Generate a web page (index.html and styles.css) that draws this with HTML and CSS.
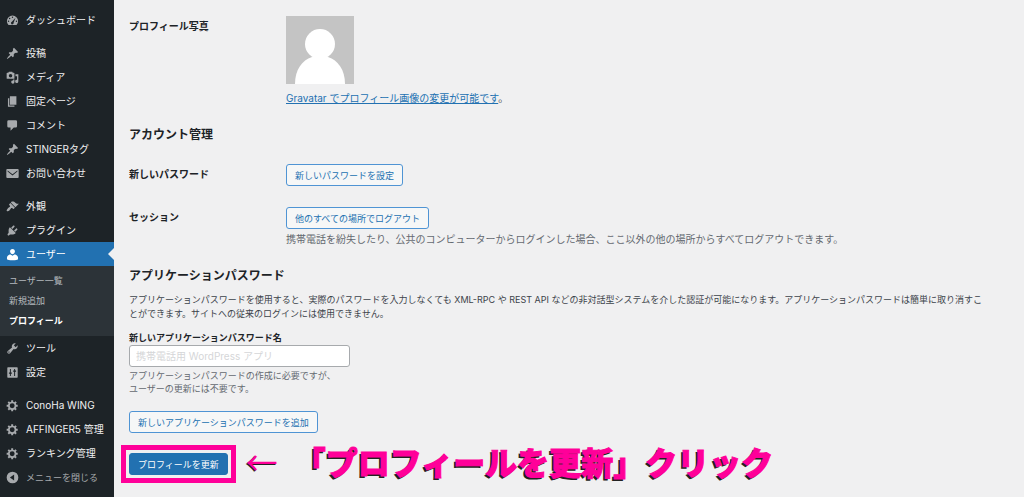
FILE: index.html
```html
<!DOCTYPE html>
<html lang="ja">

<head>
    <meta charset="UTF-8">
    <meta name="viewport" content="width=device-width, initial-scale=1.0">
    <title>プロフィール</title>
    <link rel="stylesheet" href="styles.css">
</head>

<body>
    <nav class="sidebar">
        <ul class="menu">
            <li><a href="#"><svg viewBox="0 0 20 20"><path fill-rule="evenodd" d="M3.8 17h12.4A8.6 8.6 0 0 0 18.6 11 8.6 8.6 0 0 0 1.4 11a8.6 8.6 0 0 0 2.4 6zM10 4a1.1 1.1 0 1 1 0 2.2A1.1 1.1 0 0 1 10 4zM5.6 5.8a1.1 1.1 0 1 1 0 2.2 1.1 1.1 0 0 1 0-2.2zM3.9 10a1.1 1.1 0 1 1 0 2.2 1.1 1.1 0 0 1 0-2.2zm12.2 0a1.1 1.1 0 1 1 0 2.2 1.1 1.1 0 0 1 0-2.2zM14.6 5.8l-2.9 7.8a2 2 0 1 1-2.6-1.5z"/></svg>ダッシュボード</a></li>
            <li class="separator"></li>
            <li><a href="#"><svg viewBox="0 0 20 20"><path d="M10.44 3.02l1.82-1.82 6.36 6.35-1.83 1.82c-1.05-.68-2.48-.57-3.41.36l-.75.75c-.92.93-1.04 2.35-.35 3.41l-1.83 1.82-2.41-2.41-2.8 2.79c-.42.42-3.38 2.71-3.8 2.29s1.86-3.39 2.28-3.81l2.79-2.79L4.1 9.36l1.83-1.82c1.05.69 2.48.57 3.4-.36l.75-.75c.93-.92 1.05-2.35.36-3.41z"/></svg>投稿</a></li>
            <li><a href="#"><svg viewBox="0 0 20 20"><path fill-rule="evenodd" d="M2 2.5h1.500L4.500 1h5l1 1.500H12q1 0 1 1V11q0 1-1 1H2q-1 0-1-1V3.500q0-1 1-1zM7 4.500a2.700 2.700 0 1 0 0 5.400 2.700 2.700 0 0 0 0-5.400z"/><path d="M14.500 5H19v11a2.500 2.500 0 1 1-2-2.450V8h-2.500zM11 13h2v4a2.500 2.500 0 1 1-2-2.450z"/></svg>メディア</a></li>
            <li><a href="#"><svg viewBox="0 0 20 20"><path d="M6 15V2h10v13H6zm-1 1h8v2H3V5h2v11z"/></svg>固定ページ</a></li>
            <li><a href="#"><svg viewBox="0 0 20 20"><path d="M4 2h11q2 0 2 2v7q0 2-2 2h-3l-5 5v-5H4q-2 0-2-2V4q0-2 2-2z"/></svg>コメント</a></li>
            <li><a href="#"><svg viewBox="0 0 20 20"><path d="M10.44 3.02l1.82-1.82 6.36 6.35-1.83 1.82c-1.05-.68-2.48-.57-3.41.36l-.75.75c-.92.93-1.04 2.35-.35 3.41l-1.83 1.82-2.41-2.41-2.8 2.79c-.42.42-3.38 2.71-3.8 2.29s1.86-3.39 2.28-3.81l2.79-2.79L4.1 9.36l1.83-1.82c1.05.69 2.48.57 3.4-.36l.75-.75c.93-.92 1.05-2.35.36-3.41z"/></svg>STINGERタグ</a></li>
            <li><a href="#"><svg viewBox="0 0 20 20"><path fill-rule="evenodd" d="M2 3h16q1.500 0 1.500 1.500v11Q19.500 17 18 17H2Q.5 17 .5 15.500v-11Q.5 3 2 3zM2.500 5.200v1.600L10 13l7.500-6.200V5.200L10 11z"/></svg>お問い合わせ</a></li>
            <li class="separator"></li>
            <li><a href="#"><svg viewBox="0 0 20 20"><path d="M14.48 11.06L7.41 3.99l1.5-1.5c.5-.56 2.3-.47 3.51.32 1.21.8 1.43 1.28 2.91 2.1 1.18.64 2.45 1.26 4.45.85zm-.71.71L6.7 4.7 4.93 6.47c-.39.39-.39 1.02 0 1.41l1.06 1.06c.39.39.39 1.03 0 1.42-.6.6-1.43 1.11-2.21 1.69-.35.26-.7.53-1.01.84C1.43 14.23.4 16.08 1.4 17.07c.99 1 2.84-.03 4.18-1.36.31-.31.58-.66.85-1.02.57-.78 1.08-1.61 1.69-2.21.39-.39 1.02-.39 1.41 0l1.06 1.06c.39.39 1.02.39 1.41 0z"/></svg>外観</a></li>
            <li><a href="#"><svg viewBox="0 0 20 20"><path d="M13.11 4.36L9.87 7.6 8 5.73l3.24-3.24c.35-.34 1.05-.2 1.56.32.52.51.66 1.21.31 1.55zm-8 1.77l.91-1.12 9.01 9.01-1.19.84c-.71.71-2.63 1.16-3.82 1.16H6.14L4.9 17.26c-.59.59-1.54.59-2.12 0-.59-.58-.59-1.53 0-2.12l1.24-1.24v-3.88c0-1.13.4-3.19 1.09-3.89zm7.26 3.97l3.24-3.24c.34-.35 1.04-.21 1.55.31.52.51.66 1.21.31 1.55l-3.24 3.25z"/></svg>プラグイン</a></li>
            <li class="current">
                <a href="#"><svg viewBox="0 0 20 20"><path d="M10 9.500c-3 0-3.700-3.600-3.700-3.600C6 3.500 7.300 1.500 10 1.500s4 2 3.700 4.400c0 0-.7 3.600-3.700 3.600zm0 2.500l3-2c3 0 5.500 2.500 5.500 4.800v2.700s-4 1.200-8.500 1.200-8.500-1.200-8.500-1.200v-2.700C1.500 12.500 4 10 7 10z"/></svg>ユーザー</a>
                <ul class="submenu">
                    <li><a href="#">ユーザー一覧</a></li>
                    <li><a href="#">新規追加</a></li>
                    <li><a class="active" href="#">プロフィール</a></li>
                </ul>
            </li>
            <li><a href="#"><svg viewBox="0 0 20 20"><path d="M16.68 9.77c-1.34 1.34-3.3 1.67-4.95.99l-5.41 6.52c-.99.99-2.59.99-3.58 0s-.99-2.59 0-3.57l6.52-5.42c-.68-1.65-.35-3.61.99-4.95 1.28-1.28 3.12-1.62 4.72-1.06l-2.89 2.89 2.82 2.82 2.86-2.87c.53 1.58.18 3.39-1.08 4.65zM3.81 16.21c.4.39 1.04.39 1.43 0 .4-.4.4-1.04 0-1.43-.39-.4-1.03-.4-1.43 0-.39.39-.39 1.03 0 1.43z"/></svg>ツール</a></li>
            <li><a href="#"><svg viewBox="0 0 20 20"><path fill-rule="evenodd" d="M3 2h14q1 0 1 1v14q0 1-1 1H3q-1 0-1-1V3q0-1 1-1zM6 4.500V10H4.500v2H6v3.500h1.500V12H9v-2H7.500V4.500zM12.500 4.500V7H11v2h1.500v6.500H14V9h1.500V7H14V4.500z"/></svg>設定</a></li>
            <li class="separator"></li>
            <li><a href="#"><svg viewBox="0 0 20 20"><path fill-rule="evenodd" d="M18 12h-2.180c-.17.7-.44 1.350-.81 1.930l1.540 1.540-2.100 2.100-1.540-1.540c-.58.36-1.230.63-1.910.79V19H8v-2.180c-.68-.16-1.330-.43-1.910-.79l-1.540 1.540-2.120-2.120 1.540-1.540c-.36-.58-.63-1.230-.79-1.910H1V9.030h2.170c.16-.7.44-1.350.8-1.940L2.430 5.550l2.100-2.100 1.540 1.540c.58-.37 1.240-.64 1.930-.81V2h3v2.180c.68.16 1.330.43 1.910.79l1.540-1.540 2.120 2.120-1.540 1.540c.36.59.64 1.240.8 1.940H18zm-8.500 2.300a3.800 3.800 0 1 0 0-7.600 3.800 3.800 0 0 0 0 7.600z"/></svg>ConoHa WING</a></li>
            <li><a href="#"><svg viewBox="0 0 20 20"><path fill-rule="evenodd" d="M18 12h-2.180c-.17.7-.44 1.350-.81 1.930l1.540 1.540-2.100 2.100-1.540-1.540c-.58.36-1.230.63-1.910.79V19H8v-2.180c-.68-.16-1.330-.43-1.910-.79l-1.540 1.540-2.120-2.120 1.540-1.540c-.36-.58-.63-1.230-.79-1.910H1V9.030h2.170c.16-.7.44-1.350.8-1.940L2.430 5.550l2.100-2.100 1.540 1.540c.58-.37 1.240-.64 1.930-.81V2h3v2.180c.68.16 1.330.43 1.910.79l1.540-1.540 2.120 2.120-1.540 1.540c.36.59.64 1.240.8 1.940H18zm-8.500 2.300a3.800 3.800 0 1 0 0-7.600 3.800 3.800 0 0 0 0 7.600z"/></svg>AFFINGER5 管理</a></li>
            <li><a href="#"><svg viewBox="0 0 20 20"><path fill-rule="evenodd" d="M18 12h-2.180c-.17.7-.44 1.350-.81 1.930l1.540 1.540-2.100 2.100-1.540-1.540c-.58.36-1.230.63-1.910.79V19H8v-2.180c-.68-.16-1.330-.43-1.910-.79l-1.540 1.540-2.120-2.120 1.540-1.540c-.36-.58-.63-1.230-.79-1.910H1V9.030h2.170c.16-.7.44-1.350.8-1.940L2.430 5.550l2.100-2.100 1.540 1.540c.58-.37 1.240-.64 1.930-.81V2h3v2.180c.68.16 1.330.43 1.910.79l1.540-1.540 2.120 2.120-1.540 1.540c.36.59.64 1.240.8 1.940H18zm-8.500 2.300a3.800 3.800 0 1 0 0-7.600 3.800 3.800 0 0 0 0 7.600z"/></svg>ランキング管理</a></li>
        </ul>
        <button type="button" class="collapse"><svg viewBox="0 0 20 20"><path fill-rule="evenodd" d="M10 1a9 9 0 1 1 0 18 9 9 0 0 1 0-18zm2.500 4.500L6 10l6.500 4.500z"/></svg>メニューを閉じる</button>
    </nav>

    <main class="content">
        <div class="row">
            <div class="label">プロフィール写真</div>
            <div class="field">
                <svg class="avatar" viewBox="0 0 68 68">
                    <rect width="68" height="68" fill="#c4c4c4"/>
                    <circle cx="34" cy="28" r="15" fill="#fff"/>
                    <path d="M9 68C9 54 16 44 26 41h16c10 3 17 13 17 27z" fill="#fff"/>
                </svg>
                <p class="photo-note"><a href="#">Gravatar でプロフィール画像の変更が可能です</a>。</p>
            </div>
        </div>

        <h2>アカウント管理</h2>
        <div class="row">
            <div class="label">新しいパスワード</div>
            <div class="field"><button type="button" class="button">新しいパスワードを設定</button></div>
        </div>
        <div class="row">
            <div class="label">セッション</div>
            <div class="field">
                <button type="button" class="button">他のすべての場所でログアウト</button>
                <p class="session-note">携帯電話を紛失したり、公共のコンピューターからログインした場合、ここ以外の他の場所からすべてログアウトできます。</p>
            </div>
        </div>

        <h2>アプリケーションパスワード</h2>
        <p class="intro">アプリケーションパスワードを使用すると、実際のパスワードを入力しなくても XML-RPC や REST API などの非対話型システムを介した認証が可能になります。アプリケーションパスワードは簡単に取り消すこ<br>とができます。サイトへの従来のログインには使用できません。</p>
        <div class="app-password">
            <label for="app-name">新しいアプリケーションパスワード名</label>
            <input type="text" id="app-name" placeholder="携帯電話用 WordPress アプリ">
            <p>アプリケーションパスワードの作成に必要ですが、<br>ユーザーの更新には不要です。</p>
        </div>
        <button type="button" class="button">新しいアプリケーションパスワードを追加</button>

        <div class="submit">
            <div class="highlight"><button type="submit" class="button primary">プロフィールを更新</button></div>
            <div class="callout"><span class="arrow">←</span><span>「プロフィールを更新」クリック</span></div>
        </div>
    </main>
</body>

</html>
```

FILE: styles.css
```css
* {
    box-sizing: border-box;
}

body {
    margin: 0;
    display: flex;
    min-height: 100vh;
    background: #f0f0f1;
    color: #3c434a;
    font-family: Inter, "Noto Sans CJK JP", sans-serif;
    font-size: 9px;
    line-height: 14px;
}

p,
h2,
ul {
    margin: 0;
    padding: 0;
}

ul {
    list-style: none;
}

button,
input {
    font-family: inherit;
    font-size: 9px;
}

/* sidebar */
.sidebar {
    flex: 0 0 114px;
    padding-top: 8px;
    background: #1d2327;
}

.menu a,
.collapse {
    display: flex;
    align-items: center;
    gap: 7px;
    height: 24px;
    padding-left: 6px;
    color: #f0f0f1;
    font-size: 10px;
    text-decoration: none;
    white-space: nowrap;
}

.sidebar svg {
    flex: none;
    width: 13px;
    height: 13px;
    fill: #a7aaad;
}

.separator {
    height: 9px;
}

.current {
    position: relative;
}

.current > a {
    background: #2271b1;
    color: #fff;
}

.current > a svg {
    fill: #fff;
}

.current::after {
    content: "";
    position: absolute;
    top: 6px;
    right: 0;
    border: 6px solid transparent;
    border-left: 0;
    border-right-color: #f0f0f1;
}

.submenu {
    padding: 5px 0;
    background: #2c3338;
}

.submenu a {
    height: 20px;
    padding-left: 9px;
    color: #b4b9be;
    font-size: 9px;
}

.submenu .active {
    color: #fff;
    font-weight: bold;
}

.collapse {
    width: 100%;
    border: none;
    background: none;
    color: #a7aaad;
    font-size: 9px;
    cursor: pointer;
}

/* profile form */
.content {
    flex: 1;
    min-width: 0;
    padding: 16px 12px 16px 15px;
}

.row {
    display: flex;
    margin-bottom: 21px;
}

.label {
    flex: 0 0 157px;
    color: #1d2327;
    font-size: 10px;
    font-weight: bold;
    line-height: 21px;
}

.field {
    flex: 1;
}

.avatar {
    display: block;
    width: 68px;
    height: 68px;
}

.photo-note {
    margin-top: 7px;
    font-size: 10px;
}

.photo-note a {
    color: #2271b1;
}

.session-note {
    margin-top: 3px;
    color: #646970;
    font-size: 10px;
}

h2 {
    margin-bottom: 20px;
    color: #1d2327;
    font-size: 12px;
    line-height: 18px;
}

.button {
    display: block;
    height: 22px;
    padding: 0 8px;
    border: 1px solid #4f94d4;
    border-radius: 3px;
    background: #f6f7f7;
    color: #2271b1;
    white-space: nowrap;
    cursor: pointer;
}

.primary {
    border-color: #2271b1;
    background: #2271b1;
    color: #fff;
}

.intro {
    margin-top: -12px;
    white-space: nowrap;
}

.app-password {
    margin: 10px 0 16px;
}

.app-password label {
    display: block;
    color: #1d2327;
    font-weight: bold;
}

.app-password input {
    display: block;
    width: 221px;
    height: 22px;
    margin-bottom: 2px;
    padding: 0 6px;
    border: 1px solid #a7aaad;
    border-radius: 3px;
    background: #fff;
    font-size: 10px;
}

.app-password input::placeholder {
    color: #d5d6d8;
}

.app-password p {
    color: #646970;
    line-height: 13px;
}

.submit {
    display: flex;
    align-items: center;
    gap: 18px;
    height: 22px;
    margin-top: 20px;
}

.highlight {
    position: relative;
}

.highlight::after {
    content: "";
    position: absolute;
    inset: -8px;
    border: 5px solid #ff0099;
    pointer-events: none;
}

.callout {
    display: flex;
    align-items: center;
    gap: 16px;
    padding-bottom: 6px;
    color: #ff0099;
    font-family: "Noto Sans CJK JP", sans-serif;
    font-size: 32px;
    font-weight: 900;
    line-height: 32px;
    text-shadow: -2px 2px #222;
    -webkit-text-stroke: 1px #ff0099;
    white-space: nowrap;
}

.arrow {
    font-weight: normal;
    text-shadow: -1px 1px #222;
    -webkit-text-stroke: 0;
}
```
